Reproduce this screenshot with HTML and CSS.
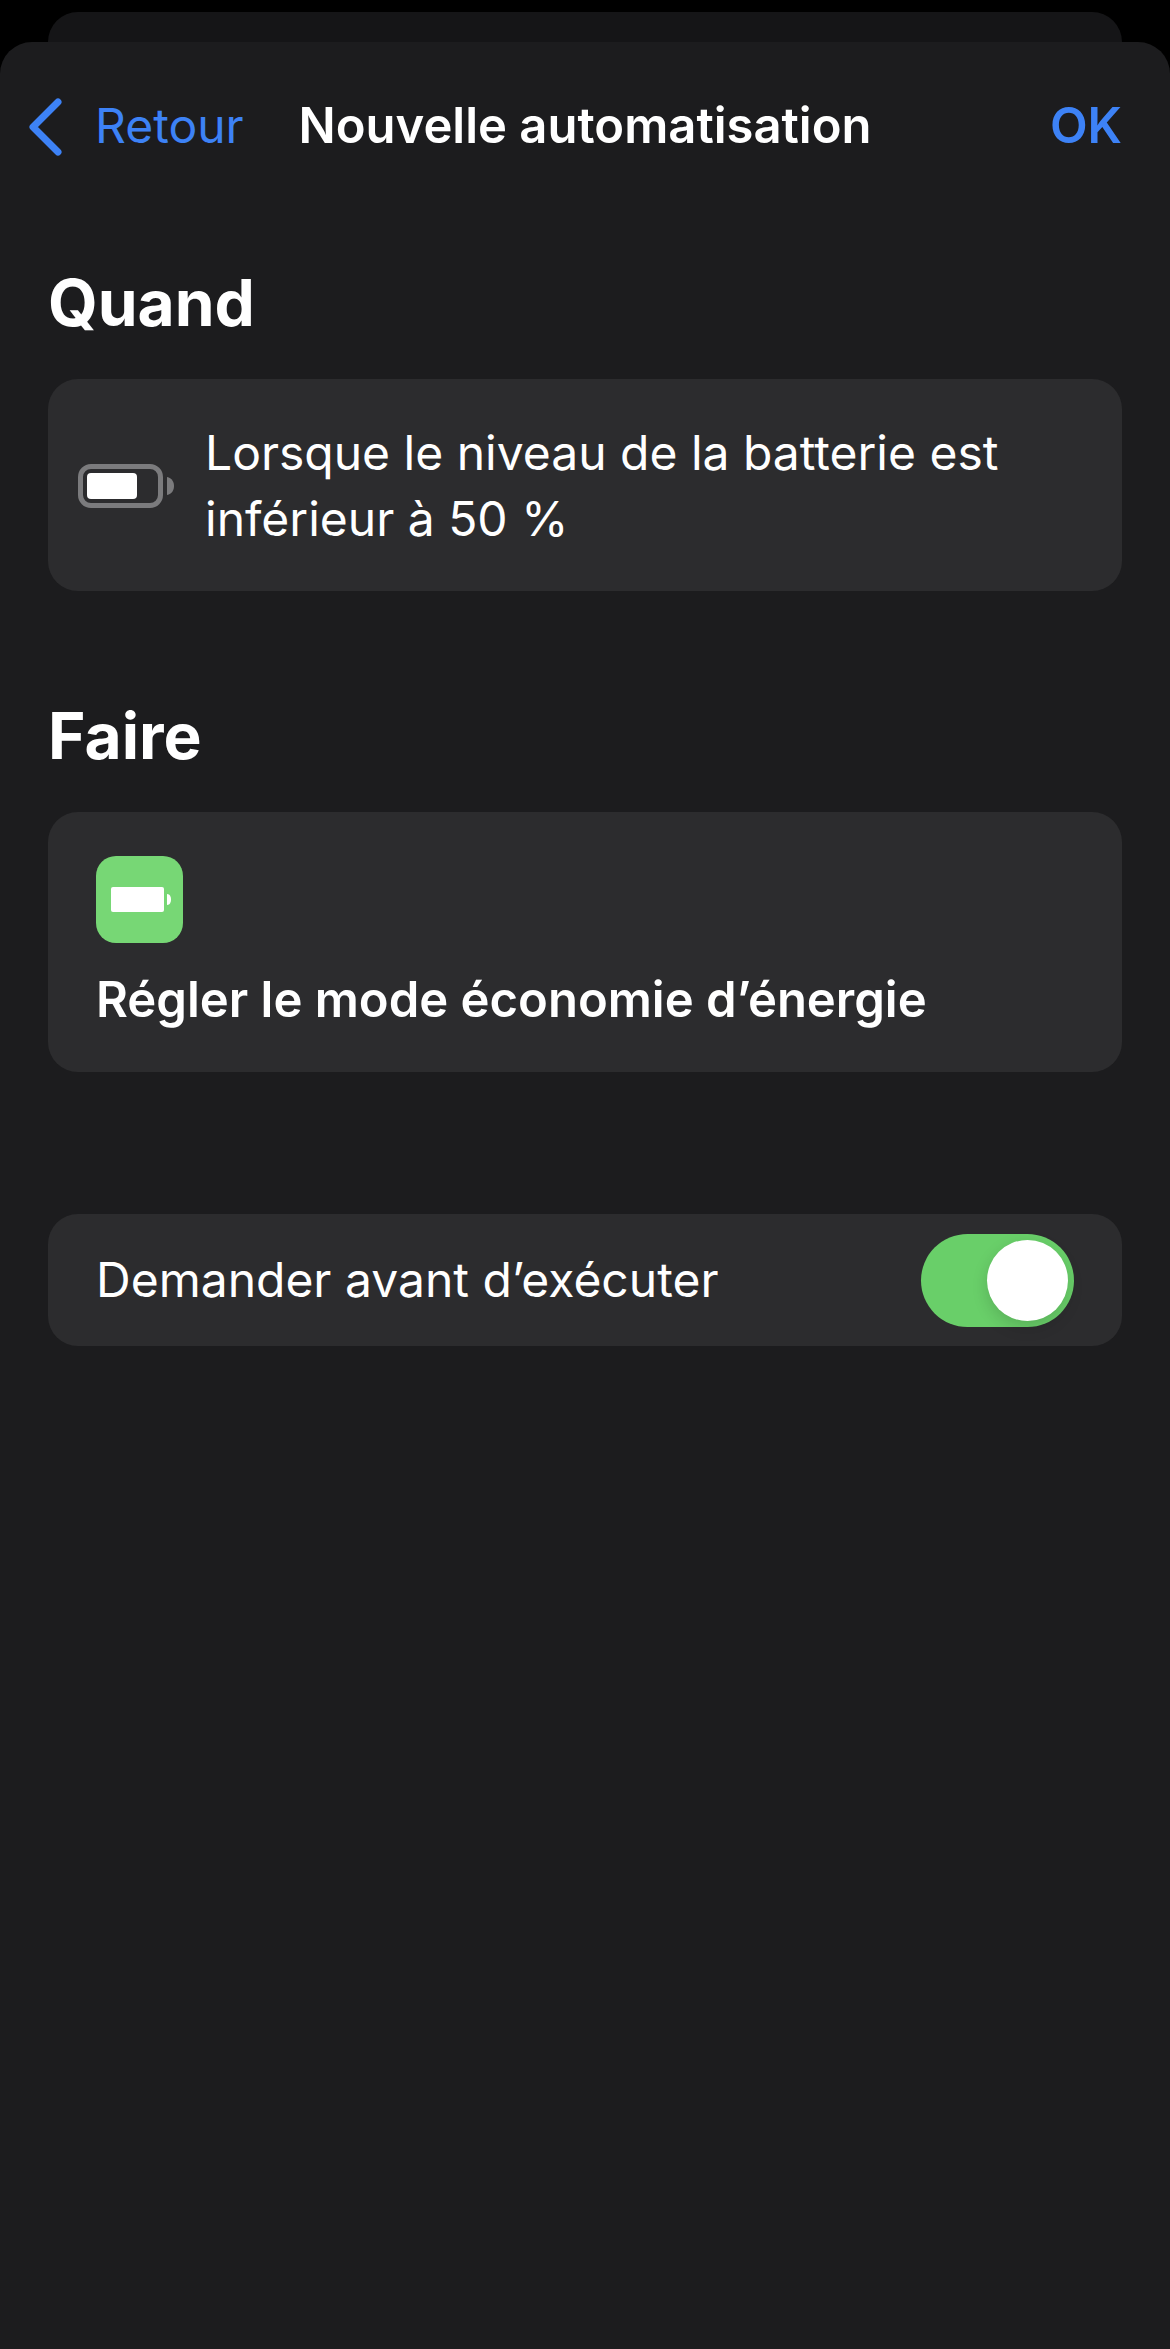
FILE: index.html
```
<!DOCTYPE html>
<html lang="fr">
<head>
  <meta charset="UTF-8">
  <meta name="viewport" content="width=device-width, initial-scale=1.0">
  <title>Nouvelle automatisation</title>
  <link rel="stylesheet" href="styles.css">
</head>
<body>
  <div class="back-sheet"></div>

  <div class="sheet">
    <header class="navbar">
      <a class="back" href="#">
        <svg class="chevron" width="36" height="60" viewBox="0 0 36 60" aria-hidden="true">
          <path d="M31 6 L6 31 L31 56" fill="none" stroke="currentColor" stroke-width="7" stroke-linecap="round" stroke-linejoin="round"/>
        </svg>
        <span>Retour</span>
      </a>
      <h1>Nouvelle automatisation</h1>
      <button type="button" class="ok">OK</button>
    </header>

    <main>
      <section>
        <h2>Quand</h2>
        <div class="card trigger">
          <svg class="battery" width="97" height="44" viewBox="0 0 97 44" aria-hidden="true">
            <rect x="2.5" y="2.5" width="80" height="39" rx="10.5" fill="none" stroke="#7b7b7d" stroke-width="5"/>
            <rect x="9" y="9" width="50" height="26" rx="4" fill="#fff"/>
            <path d="M89 13 C94 14 96 18 96 22 C96 26 94 30 89 31 Z" fill="#7b7b7d"/>
          </svg>
          <p>Lorsque le niveau de la batterie est inférieur à 50 %</p>
        </div>
      </section>

      <section>
        <h2>Faire</h2>
        <div class="card action">
          <svg class="action-icon" width="87" height="87" viewBox="0 0 87 87" aria-hidden="true">
            <rect width="87" height="87" rx="20" fill="#77d775"/>
            <rect x="15" y="31" width="53" height="25" rx="2" fill="#fff"/>
            <path d="M71 38 C74 38 75 41 75 43.5 C75 46 74 49 71 49 Z" fill="#fff"/>
          </svg>
          <p>Régler le mode économie d’énergie</p>
        </div>
      </section>

      <div class="card option">
        <label for="ask">Demander avant d’exécuter</label>
        <input type="checkbox" id="ask" class="switch" role="switch" checked>
      </div>
    </main>
  </div>
</body>
</html>
```
FILE: styles.css
```
* {
  box-sizing: border-box;
}

body {
  margin: 0;
  min-height: 100vh;
  display: flex;
  flex-direction: column;
  background-color: #000;
  color: #fff;
  font-family: Inter, "Liberation Sans", sans-serif;
  font-size: 48px;
  line-height: 66px;
}

h1, h2, p {
  margin: 0;
}

/* Edge of the sheet underneath */
.back-sheet {
  height: 60px;
  margin: 12px 48px 0;
  border-radius: 30px 30px 0 0;
  background-color: #151517;
}

.sheet {
  flex: 1;
  margin-top: -30px;
  border-radius: 32px 32px 0 0;
  background-color: #1c1c1e;
}

.navbar {
  display: grid;
  grid-template-columns: 1fr auto 1fr;
  align-items: center;
  height: 168px;
  padding: 0 48px;
}

.navbar h1 {
  font-size: 49px;
  font-weight: 600;
}

.back {
  display: flex;
  align-items: center;
  gap: 32px;
  margin-left: -21px; /* chevron hangs outside the text margin */
  color: #3d82f6;
  text-decoration: none;
}

.ok {
  justify-self: end;
  padding: 0;
  border: none;
  background: none;
  color: #3d82f6;
  font: inherit;
  font-size: 49px;
  font-weight: 600;
  cursor: pointer;
}

main {
  padding: 53px 48px;
}

section {
  margin-bottom: 105px;
}

h2 {
  margin-bottom: 36px;
  font-size: 64px;
  font-weight: 700;
  line-height: 80px;
}

.card {
  border-radius: 30px;
  background-color: #2c2c2e;
}

.trigger {
  display: flex;
  align-items: center;
  gap: 30px;
  padding: 41px 48px 39px 30px;
}

.battery {
  flex-shrink: 0;
}

.action {
  display: flex;
  flex-direction: column;
  gap: 24px;
  padding: 44px 48px 39px;
  font-size: 49px;
  font-weight: 600;
}

.option {
  display: flex;
  align-items: center;
  justify-content: space-between;
  min-height: 132px;
  margin-top: 142px;
  padding: 0 48px;
}

.switch {
  appearance: none;
  flex-shrink: 0;
  display: flex;
  width: 153px;
  height: 93px;
  margin: 0;
  padding: 6px;
  border-radius: 48px;
  background-color: #48484a;
  cursor: pointer;
}

.switch::before {
  content: "";
  width: 81px;
  height: 81px;
  border-radius: 50%;
  background-color: #fff;
  box-shadow: 0 6px 16px rgba(0, 0, 0, 0.15);
}

.switch:checked {
  justify-content: flex-end;
  background-color: #69cf69;
}
```
